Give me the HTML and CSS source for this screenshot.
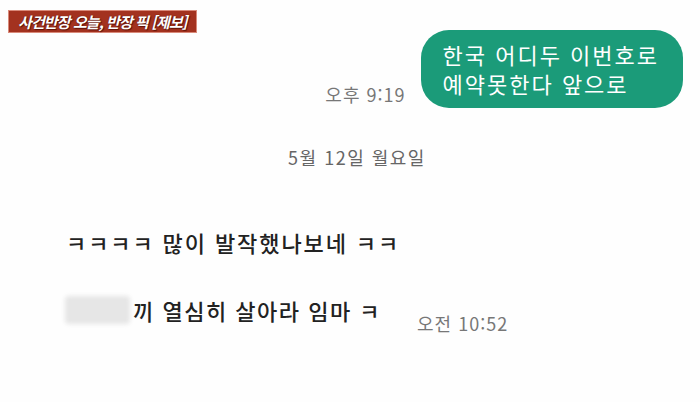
FILE: index.html
```html
<!DOCTYPE html>
<html lang="ko">
<head>
  <meta charset="UTF-8" />
  <meta name="viewport" content="width=device-width, initial-scale=1.0"/>
  <title>사건반장 - 제보</title>
  <link rel="stylesheet" href="styles.css">
</head>
<body>
  <div class="screen">
    <div class="top-row">
      <div class="tag">사건반장 오늘, 반장 픽 [제보]</div>
      <div class="sent">
        <span class="time">오후 9:19</span>
        <div class="bubble">한국 어디두 이번호로<br>예약못한다 앞으로</div>
      </div>
    </div>

    <div class="date">5월 12일 월요일</div>

    <div class="msg first">ㅋㅋㅋㅋ 많이 발작했나보네 ㅋㅋ</div>

    <div class="msg-row">
      <div class="msg"><span class="blurred"></span>끼 열심히 살아라 임마 ㅋ</div>
      <span class="time late">오전 10:52</span>
    </div>
  </div>
</body>
</html>
```

FILE: styles.css
```css
body {
  margin: 0;
  background-color: #fefefe;
  font-family: "Noto Sans CJK KR", "Noto Sans", sans-serif;
}
.screen {
  width: 700px;
  height: 402px;
  overflow: hidden;
}
.top-row {
  display: flex;
  justify-content: space-between;
  align-items: flex-start;
  padding: 10px 17px 0 8px;
}
.tag {
  background-color: #a3321f;
  border: 1px solid #d98a7a;
  color: #fff;
  font-size: 15px;
  font-weight: bold;
  font-style: italic;
  height: 21px;
  line-height: 21px;
  padding: 0 9px;
  letter-spacing: -0.9px;
  text-shadow: 0 0 1px #5a1208, 1px 1px 1px #5a1208;
}
.sent {
  display: flex;
  align-items: flex-end;
  gap: 15px;
  margin-top: 20px;
}
.time {
  color: #777;
  font-size: 18px;
  line-height: 22px;
  letter-spacing: 1px;
  margin-bottom: 3px;
}
.bubble {
  background-color: #1b9b79;
  color: #fff;
  font-size: 22px;
  line-height: 29px;
  letter-spacing: 2px;
  padding: 10px 24px 10px 22px;
  border-radius: 28px;
}
.date {
  text-align: center;
  color: #666;
  font-size: 18px;
  line-height: 24px;
  letter-spacing: 1.5px;
  margin-top: 37px;
  padding-left: 14px;
}
.msg {
  color: #222;
  font-size: 22px;
  line-height: 28px;
  letter-spacing: 1.5px;
  font-weight: 500;
  display: flex;
  align-items: center;
}
.first {
  margin: 59px 0 0 66px;
  letter-spacing: 1.9px;
}
.msg-row {
  display: flex;
  align-items: flex-start;
  margin: 40px 0 0 65px;
  gap: 36px;
}
.blurred {
  width: 65px;
  height: 28px;
  margin-right: 3px;
  background-color: #e6e6e6;
  border-radius: 4px;
  filter: blur(2px);
}
.late {
  margin-top: 16px;
}
```
